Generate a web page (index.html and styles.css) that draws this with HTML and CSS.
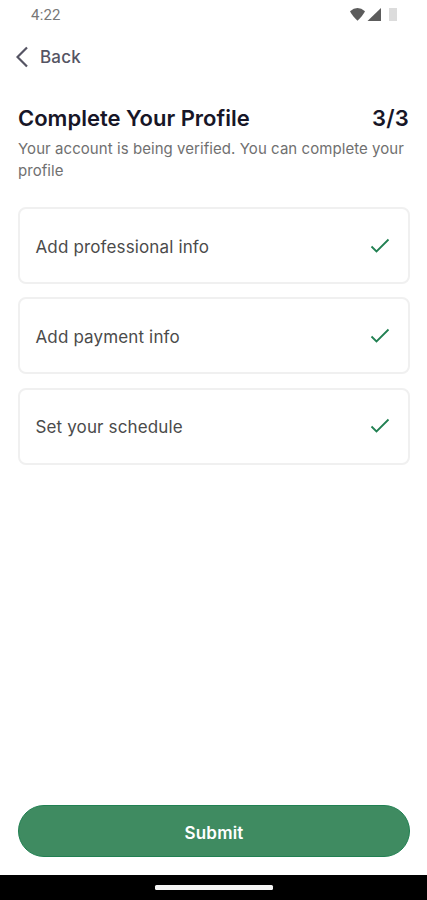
FILE: index.html
```html
<!DOCTYPE html>
<html lang="en">
<head>
<meta charset="utf-8">
<title>Complete Your Profile</title>
<link rel="stylesheet" href="styles.css">
</head>
<body>
<div class="status">
  <span class="time">4:22</span>
  <svg class="status-icons" width="50" height="16" viewBox="0 0 50 16">
    <path d="M1 4.200Q8.500 -2.400 16 4.200Q14 8.500 8.500 13.700Q3 8.500 1 4.200Z" fill="#5c5c5c"/>
    <path d="M32 1V14H18.500Z" fill="#5c5c5c"/>
    <path d="M40 1h8v13h-8z" fill="#dcdcdc"/>
  </svg>
</div>
<button class="back">
  <svg width="12" height="22" viewBox="0 0 12 22"><path d="M11 1.500L1.500 11l9.500 9.500" fill="none" stroke="#555463" stroke-width="2.200"/></svg>
  <span>Back</span>
</button>
<main class="content">
  <div class="heading"><h1>Complete Your Profile</h1><span class="step">3/3</span></div>
  <p class="note">Your account is being verified. You can complete your profile</p>
  <ul class="tasks">
    <li class="task"><span>Add professional info</span><svg class="check" width="20" height="16" viewBox="0 0 20 16"><path d="M1.500 8.500L6.500 13.500L18.500 1.500"/></svg></li>
    <li class="task"><span>Add payment info</span><svg class="check" width="20" height="16" viewBox="0 0 20 16"><path d="M1.500 8.500L6.500 13.500L18.500 1.500"/></svg></li>
    <li class="task"><span>Set your schedule</span><svg class="check" width="20" height="16" viewBox="0 0 20 16"><path d="M1.500 8.500L6.500 13.500L18.500 1.500"/></svg></li>
  </ul>
  <button class="submit">Submit</button>
</main>
<div class="navbar"><div class="handle"></div></div>
</body>
</html>
```
FILE: styles.css
```css
* { box-sizing: border-box; margin: 0; padding: 0; }
body { height: 900px; display: flex; flex-direction: column; background: #fff; font-family: Inter, sans-serif; overflow: hidden; }
button { border: 0; background: none; font-family: inherit; }
.status { height: 32px; padding: 7px 28px 0 31px; display: flex; justify-content: space-between; }
.time { font: 15px/17px Roboto, sans-serif; letter-spacing: 0.2px; color: #777; }
.status-icons { display: block; }
.back { height: 50px; padding: 0 16px; display: flex; align-items: center; gap: 12px; font-size: 17px; font-weight: 500; letter-spacing: 0.2px; color: #555463; }
.content { flex: 1; padding: 22px 17px 18px 18px; display: flex; flex-direction: column; }
.heading { display: flex; justify-content: space-between; padding-right: 1px; font-size: 22px; line-height: 29px; font-weight: 600; color: #171627; }
h1 { font-size: inherit; font-weight: inherit; }
.step { letter-spacing: 0.2px; }
.note { margin-top: 5px; font-size: 15px; line-height: 22px; letter-spacing: 0.06px; color: #707070; }
.tasks { list-style: none; margin-top: 25px; display: grid; gap: 13.300px; }
.task { height: 77px; padding: 0 18px 0 15.500px; display: flex; align-items: center; justify-content: space-between; border: 2px solid #f0f0f0; border-radius: 8px; font-size: 17px; line-height: 23px; letter-spacing: 0.14px; color: #4b4b4b; }
.task span { padding-top: 3px; }
.check { fill: none; stroke: #218052; stroke-width: 1.800; }
.submit { margin-top: auto; height: 52px; padding-top: 3px; border: 1px solid #218052; border-radius: 26px; background: #3f8b61; color: #fff; font-size: 17px; font-weight: 600; letter-spacing: 0.2px; }
.navbar { height: 25px; background: #000; display: flex; align-items: center; justify-content: center; }
.handle { width: 118px; height: 5px; border-radius: 1.500px; background: #f5f5f5; }
```
